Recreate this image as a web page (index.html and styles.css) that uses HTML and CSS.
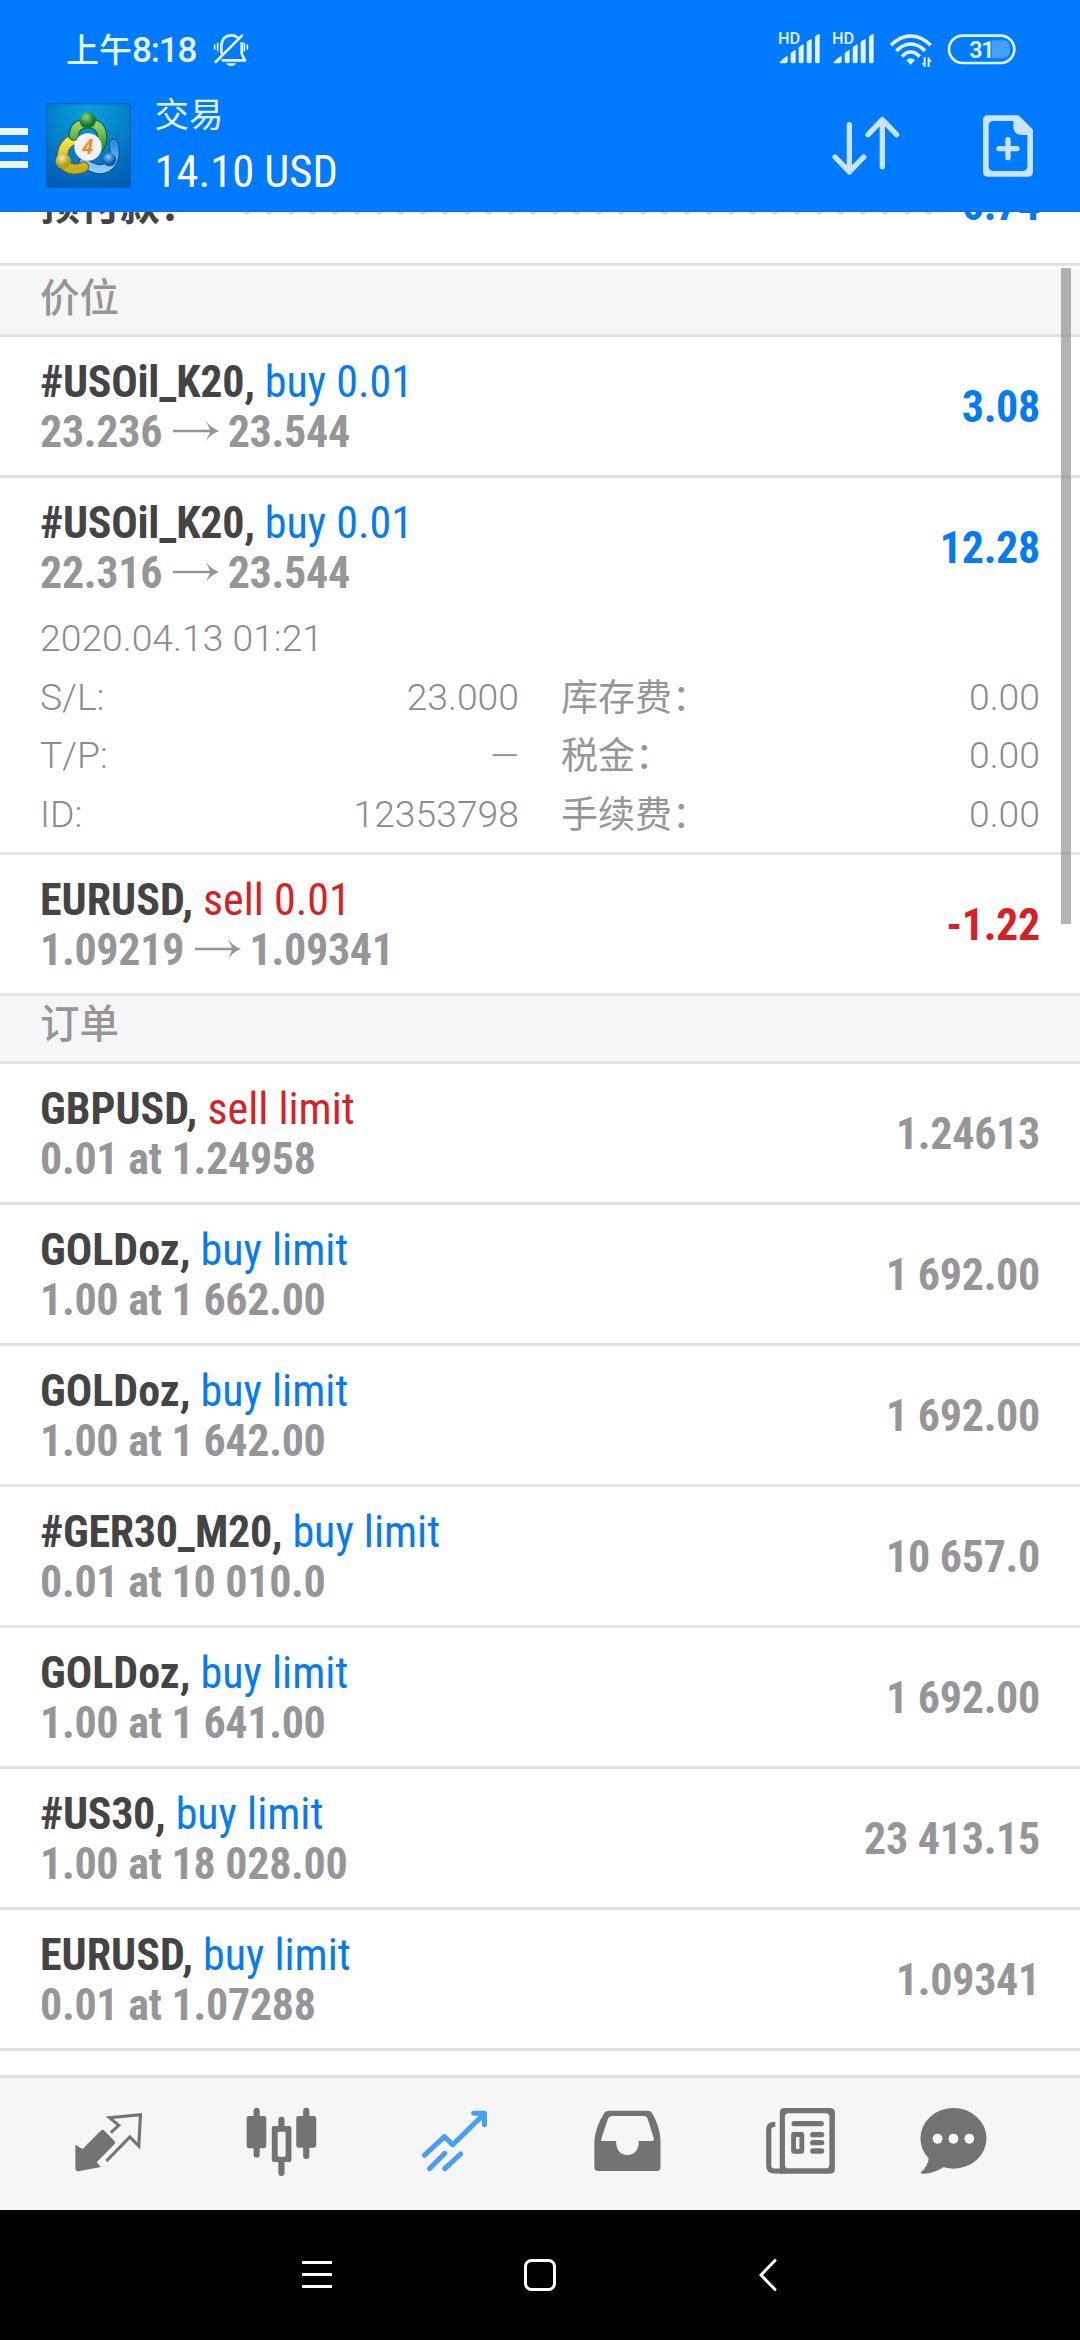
FILE: index.html
```
<!DOCTYPE html>
<html lang="zh-CN">
<head>
<meta charset="utf-8">
<title>交易</title>
<link rel="stylesheet" href="styles.css">
</head>
<body>
<div class="screen">
  <header class="header">
    <div class="status">
      <span class="clock"><span class="ampm">上午</span>8:18</span>
      <svg class="bell" viewBox="636 96 114 108" fill="none" stroke="currentColor" stroke-width="8" stroke-linecap="round">
        <path d="M664 158V140C664 118 676 106 694 106C700 106 708 108 712 112M725 130V158C725 168 734 174 734 181H668"/>
        <path d="M726 107L647 186"/>
        <path d="M678 190H708Q704 198 693 198Q682 198 678 190Z" fill="currentColor" stroke="none"/>
        <path d="M653 130V152M644 135V147M733 130V152M742 135V147" stroke-width="5"/>
      </svg>
      <svg class="signals" viewBox="112 77 724 131" fill="currentColor">
        <g id="sim">
          <text class="hd" x="115" y="132">HD</text>
          <path d="M120 186Q130 172 144 166V183Q144 189 138 189H123Q119 189 120 186ZM153 160Q155 154 168 148V184Q168 189 161 189Q153 189 153 184ZM177 143Q178 137 192 132V184Q192 189 185 189Q177 189 177 184ZM201 126Q203 120 216 116V184Q216 189 209 189Q201 189 201 184ZM226 110Q227 104 240 100V184Q240 189 233 189Q226 189 226 184Z"/>
        </g>
        <use href="#sim" x="162"/>
        <g fill="none" stroke="currentColor" stroke-width="11">
          <path d="M454 135Q481 107 513 107Q546 107 573 135"/>
          <path d="M470 152Q490 131 513 131Q537 131 556 152"/>
          <path d="M487 169Q499 155 513 155Q528 155 540 169"/>
        </g>
        <path d="M500 180Q513 168 526 180L513 193Z"/>
        <path d="M552 171H558V200H554L546 188H552ZM564 171H568L576 184H570V200H564Z"/>
        <path d="M756 120H790Q812 120 812 147Q812 174 790 174H756Z" opacity=".3"/>
        <rect x="628" y="106" width="196" height="82" rx="41" fill="none" stroke="currentColor" stroke-width="8"/>
        <text class="charge" x="689" y="174">31</text>
      </svg>
    </div>
    <div class="appbar">
      <div class="menu"><i></i><i></i><i></i></div>
      <svg class="logo" viewBox="137 310 255 255">
        <defs>
          <radialGradient id="sky" cx=".5" cy=".1" r="1"><stop offset="0" stop-color="#08a0dc"/><stop offset=".55" stop-color="#047bc6"/><stop offset="1" stop-color="#0158b2"/></radialGradient>
          <linearGradient id="green" x2="0" y2="1"><stop stop-color="#9ad468"/><stop offset="1" stop-color="#2d9a38"/></linearGradient>
          <linearGradient id="gold" x2="0" y2="1"><stop stop-color="#f8e650"/><stop offset="1" stop-color="#c4ae1c"/></linearGradient>
          <linearGradient id="blue" x2="0" y2="1"><stop stop-color="#2a8fdc"/><stop offset="1" stop-color="#8ccdf4"/></linearGradient>
          <radialGradient id="headg" cx=".4" cy=".3"><stop stop-color="#8fd38a"/><stop offset="1" stop-color="#17782c"/></radialGradient>
          <radialGradient id="heady" cx=".4" cy=".3"><stop stop-color="#f8ef9a"/><stop offset="1" stop-color="#b59a14"/></radialGradient>
          <radialGradient id="headb" cx=".4" cy=".3"><stop stop-color="#8ed0f6"/><stop offset="1" stop-color="#0a5eae"/></radialGradient>
        </defs>
        <rect x="138.500" y="311.500" width="252" height="252" rx="9" fill="url(#sky)" stroke="#0160bd" stroke-width="4"/>
        <g fill="none" stroke-linecap="round">
          <path d="M340 432Q350 482 324 500Q296 522 250 488" stroke="#06519b" stroke-width="31"/>
          <path d="M340 432Q350 482 324 500Q296 522 250 488" stroke="url(#blue)" stroke-width="24"/>
          <path d="M226 418Q192 426 186 466Q184 506 220 508Q240 508 250 502" stroke="#6d6614" stroke-width="33"/>
          <path d="M226 418Q192 426 186 466Q184 506 220 508Q240 508 250 502" stroke="url(#gold)" stroke-width="27"/>
          <path d="M220 408Q222 372 263 371Q304 372 306 412Q305 430 298 443" stroke="#0f5f27" stroke-width="31"/>
          <path d="M220 408Q222 372 263 371Q304 372 306 412Q305 430 298 443" stroke="url(#green)" stroke-width="24"/>
        </g>
        <circle cx="262" cy="362" r="25" fill="url(#headg)"/>
        <circle cx="189" cy="484" r="23" fill="url(#heady)"/>
        <circle cx="328" cy="480" r="20" fill="url(#headb)"/>
        <circle cx="263" cy="442" r="41" fill="#f6f1ee"/>
        <text class="four" x="262" y="464" text-anchor="middle">4</text>
      </svg>
      <div class="account"><div class="page">交易</div><div class="balance">14.10 USD</div></div>
      <svg class="swap" viewBox="271 344 209 184" fill="none" stroke="currentColor" stroke-width="16" stroke-linecap="round" stroke-linejoin="round">
        <path d="M326 373V514M283 470L326 515L369 470M425 499V358M382 403L425 358L468 403"/>
      </svg>
      <svg class="neworder" viewBox="726 342 157 192" fill="currentColor">
        <path fill-rule="evenodd" d="M744 346H836L879 389V515Q879 530 864 530H744Q729 530 729 515V361Q729 346 744 346ZM760 363Q746 363 746 377V499Q746 513 760 513H848Q862 513 862 499V405H846Q820 405 820 379V363Z"/>
        <path d="M804 419V473M777 446H831" fill="none" stroke="currentColor" stroke-width="16" stroke-linecap="round"/>
      </svg>
    </div>
  </header>

  <main class="list">
    <div class="margin"><span class="mlabel">预付款：</span><span class="dots"></span><span class="mvalue">6.74</span></div>
    <h2 class="section first">价位</h2>

    <div class="row"><div><div class="title"><b class="code">#USOil_K20,</b> <span class="buy">buy 0.01</span></div><div class="sub">23.236<svg class="arrow" viewBox="0 0 46 20"><path d="M0 8.700H37L33 0Q38 7 46 10Q38 13 33 20L37 11.300H0Z"/></svg>23.544</div></div><div class="value buy">3.08</div></div>

    <div class="row open"><div><div class="title"><b class="code">#USOil_K20,</b> <span class="buy">buy 0.01</span></div><div class="sub">22.316<svg class="arrow" viewBox="0 0 46 20"><path d="M0 8.700H37L33 0Q38 7 46 10Q38 13 33 20L37 11.300H0Z"/></svg>23.544</div></div><div class="value buy">12.28</div>
      <div class="details">
        <div class="date">2020.04.13 01:21</div>
        <div class="pair"><span>S/L:</span><span>23.000</span></div><div class="pair"><span class="cjk">库存费：</span><span>0.00</span></div>
        <div class="pair"><span>T/P:</span><span>—</span></div><div class="pair"><span class="cjk">税金：</span><span>0.00</span></div>
        <div class="pair"><span>ID:</span><span>12353798</span></div><div class="pair"><span class="cjk">手续费：</span><span>0.00</span></div>
      </div>
    </div>

    <div class="row"><div><div class="title"><b>EURUSD,</b> <span class="sell">sell 0.01</span></div><div class="sub">1.09219<svg class="arrow" viewBox="0 0 46 20"><path d="M0 8.700H37L33 0Q38 7 46 10Q38 13 33 20L37 11.300H0Z"/></svg>1.09341</div></div><div class="value sell">-1.22</div></div>

    <h2 class="section">订单</h2>
    <div class="row"><div><div class="title"><b>GBPUSD,</b> <span class="sell">sell limit</span></div><div class="sub">0.01 at 1.24958</div></div><div class="value">1.24613</div></div>
    <div class="row"><div><div class="title"><b>GOLDoz,</b> <span class="buy">buy limit</span></div><div class="sub">1.00 at 1 662.00</div></div><div class="value">1 692.00</div></div>
    <div class="row"><div><div class="title"><b>GOLDoz,</b> <span class="buy">buy limit</span></div><div class="sub">1.00 at 1 642.00</div></div><div class="value">1 692.00</div></div>
    <div class="row"><div><div class="title"><b class="code">#GER30_M20,</b> <span class="buy">buy limit</span></div><div class="sub">0.01 at 10 010.0</div></div><div class="value">10 657.0</div></div>
    <div class="row"><div><div class="title"><b>GOLDoz,</b> <span class="buy">buy limit</span></div><div class="sub">1.00 at 1 641.00</div></div><div class="value">1 692.00</div></div>
    <div class="row"><div><div class="title"><b class="code">#US30,</b> <span class="buy">buy limit</span></div><div class="sub">1.00 at 18 028.00</div></div><div class="value">23 413.15</div></div>
    <div class="row"><div><div class="title"><b>EURUSD,</b> <span class="buy">buy limit</span></div><div class="sub">0.01 at 1.07288</div></div><div class="value">1.09341</div></div>
    <div class="scrollbar"></div>
  </main>

  <nav class="tabs">
    <svg viewBox="215 225 200 220" preserveAspectRatio="none">
      <path d="M219 344L240 357L294 301Q298 298 302 301L333 334Q336 338 333 342L281 397L293 411L228 424Q220 424 219 417Z"/>
      <path d="M322 308L345 286L318 263L408 254L403 348L377 321L309 393" fill="none" stroke="currentColor" stroke-width="9"/>
    </svg>
    <svg viewBox="716 225 200 220" preserveAspectRatio="none" overflow="visible">
      <path d="M744 242V374M888 242V378M816 269V290M816 395V429" stroke="currentColor" stroke-width="18" stroke-linecap="round"/>
      <rect x="715" y="258" width="57" height="97" rx="7"/><rect x="859" y="258" width="58" height="95" rx="7"/>
      <path fill-rule="evenodd" d="M794 288H839Q845 288 845 294V390Q845 396 839 396H794Q788 396 788 390V294Q788 288 794 288ZM809 305Q805 305 805 309V376Q805 380 809 380H824Q828 380 828 376V309Q828 305 824 305Z"/>
    </svg>
    <svg class="active" viewBox="1218 225 200 220" preserveAspectRatio="none" fill="none" stroke="currentColor" stroke-width="15" stroke-linecap="round" stroke-linejoin="round">
      <path d="M1231 376L1289 320L1313 344L1404 252M1374 250L1405 250L1405 284M1246 416L1290 370M1290 416L1336 372" fill="none"/>
    </svg>
    <svg viewBox="154 225 200 220" preserveAspectRatio="none">
      <path fill-rule="evenodd" d="M158 330Q162 290 185 252Q190 242 200 242H312Q322 242 327 252Q348 290 350 330V412Q350 423 339 423H170Q158 423 158 412ZM178 326L197 268Q201 258 211 258H301Q310 258 313 268L331 326Q332 333 326 333H287C287 360 275 375 254 375C233 375 221 360 221 333H182Q176 333 178 326Z"/>
    </svg>
    <svg viewBox="658 225 200 220" preserveAspectRatio="none">
      <path fill-rule="evenodd" d="M712 234H844Q858 234 858 248V417Q858 431 844 431H698V248Q698 234 712 234ZM724 250Q713 250 713 261V404Q713 415 724 415H831Q842 415 842 404V261Q842 250 831 250Z"/>
      <path d="M685 283Q666 283 666 298V408Q666 423 682 423H704" fill="none" stroke="currentColor" stroke-width="15"/>
      <rect x="732" y="273" width="94" height="16" rx="8"/>
      <path fill-rule="evenodd" d="M738 306H762Q769 306 769 313V364Q769 371 762 371H738Q731 371 731 364V313Q731 306 738 306ZM745 321V357H755V321Z"/>
      <rect x="786" y="306" width="41" height="16" rx="8"/><rect x="786" y="330" width="41" height="16" rx="8"/><rect x="786" y="355" width="41" height="16" rx="8"/>
    </svg>
    <svg viewBox="1099 225 200 220" preserveAspectRatio="none">
      <ellipse cx="1199" cy="325" rx="96" ry="91"/>
      <path d="M1128 378Q1127 408 1104 427Q1103 432 1115 431Q1148 428 1172 410Z"/>
      <g fill="#fff"><ellipse cx="1153" cy="326" rx="14" ry="15"/><ellipse cx="1199" cy="326" rx="14" ry="15"/><ellipse cx="1245" cy="326" rx="14" ry="15"/></g>
    </svg>
  </nav>

  <div class="sysnav">
    <svg viewBox="0 0 30 32" width="30" height="32"><path d="M0 3.500H30M0 15.500H30M0 27.500H30" stroke="#fff" stroke-width="3"/></svg>
    <svg viewBox="0 0 32 32" width="32" height="32"><rect x="1.500" y="1.500" width="29" height="29" rx="6" fill="none" stroke="#fff" stroke-width="3"/></svg>
    <svg viewBox="0 0 18 32" width="18" height="32"><path d="M16 1.500L2 16L16 30.500" fill="none" stroke="#fff" stroke-width="3" stroke-linecap="round"/></svg>
  </div>
</div>
</body>
</html>
```
FILE: styles.css
```
* { box-sizing: border-box; }
body { margin: 0; background: #fff; font-family: Roboto, "Noto Sans CJK SC", sans-serif; }
svg { display: block; flex: none; }

.screen { width: 1080px; height: 2340px; display: flex; flex-direction: column; overflow: hidden; }

.header { height: 212px; flex: none; background: #007aff; color: #fff; position: relative; z-index: 1; border-bottom: 1px solid #0c6fdc; }
.status { height: 88px; padding: 25px 62px 0 66px; display: flex; align-items: flex-start; color: #e2f4ff; }
.clock { margin-top: 3px; font-size: 35px; font-weight: 500; line-height: 40px; letter-spacing: -1.2px; white-space: nowrap; }
.ampm { font-family: "Noto Sans CJK SC", sans-serif; font-size: 33px; letter-spacing: 0; }
.bell { width: 38px; height: 36px; margin: 7px 0 0 16px; }
.signals { width: 241.3px; height: 43.7px; margin: .5px 0 0 auto; overflow: visible; }
.hd { font: 500 49px Roboto, sans-serif; }
.charge { font: 600 70px Roboto, sans-serif; letter-spacing: -4px; }

.appbar { height: 124px; display: flex; align-items: flex-start; }
.menu { width: 28px; padding-top: 40px; display: grid; gap: 9.500px; }
.menu i { height: 7px; background: #e9f6ff; }
.logo { width: 85px; height: 85px; margin: 15px 0 0 18px; }
.four { font: italic 700 62px Roboto, sans-serif; fill: #ef8a2d; }
.account { margin-left: 23.500px; flex: 1; }
.page { font-size: 34.500px; line-height: 50px; margin-top: 2px; color: #e4f4ff; }
.balance { font: 400 44.500px/50px "Roboto Condensed", Roboto, sans-serif; margin-top: 7px; }
.swap { width: 69.700px; height: 61.300px; margin-top: 27px; color: #c9e4ff; }
.neworder { width: 52.300px; height: 64px; margin: 26px 46px 0 81.500px; color: #c9e4ff; }

.list { position: relative; height: 1863px; flex: none; overflow: hidden; }
.margin { height: 54px; padding: 0 40px; display: flex; border-bottom: 3px solid #e3e3e3; font-weight: 700; }
.margin > span { margin-top: -34px; line-height: 50px; }
.mlabel { font-family: "Noto Sans CJK SC", sans-serif; font-size: 40px; color: #444; width: 196px; }
.margin > .dots { width: 704px; height: 8px; margin: -5px 0 0; background: radial-gradient(circle, #dedee2 3.500px, transparent 4.200px) 0 0 / 22px 8px repeat-x; }
.margin > .mvalue { margin: -32px 0 0 auto; font: 700 44px/50px "Roboto Condensed", sans-serif; letter-spacing: -.3px; color: #057af2; }

.section { margin: 0; height: 68px; padding-left: 40px; background: #f6f6f6; border-bottom: 3px solid #e3e3e3; font: 500 39.500px/50px "Noto Sans CJK SC", sans-serif; color: #969698; }
.section.first { height: 71px; border-top: 4px solid #fff; }

.row { display: flex; flex-wrap: wrap; align-content: flex-start; justify-content: space-between; height: 141px; padding: 20px 40px 0; border-bottom: 3px solid #e3e3e3; font: 44px/50px "Roboto Condensed", Roboto, sans-serif; white-space: nowrap; }
.row.open { height: 377px; }
.title { height: 50px; }
.title b { color: #444; }
.title .code { letter-spacing: -.3px; }
.sub, .value { font-weight: 700; color: #969698; letter-spacing: -.3px; }
.sub { height: 50px; }
.value { padding-top: 25px; }
.buy, .value.buy { color: #057af2; }
.sell, .value.sell { color: #d81f26; }
.arrow { display: inline-block; width: 46px; height: 20px; margin: 0 9px 6px 10.500px; fill: #969698; }

.details { width: 100%; margin-top: 11px; display: grid; grid-template-columns: 479px 479px; column-gap: 42px; font: 300 37.300px/58.500px Roboto, sans-serif; color: #8c8c8e; }
.date { grid-column: 1 / 3; }
.pair { display: flex; justify-content: space-between; height: 58.500px; }
.cjk { font-family: "Noto Sans CJK SC", sans-serif; font-weight: 400; font-size: 37px; color: #969698; margin-top: -2px; }

.scrollbar { position: absolute; top: 56px; right: 9px; width: 10px; height: 656px; background: rgba(128, 128, 128, .6); }

.tabs { height: 135px; flex: none; padding: 27px 0 0 22px; display: grid; grid-template-columns: repeat(5, 173px) 132px; justify-items: center; align-items: start; background: #f6f6f6; border-top: 3px solid #e0e0e0; color: #737373; fill: currentColor; }
.tabs svg { width: 68.900px; height: 73.300px; }
.tabs .active { color: #4a9df5; }

.sysnav { flex: 1; background: #000; display: flex; align-items: center; padding-left: 302px; }
.sysnav svg + svg { margin-left: 192px; }
.sysnav svg + svg + svg { margin-left: 202.500px; }
```
